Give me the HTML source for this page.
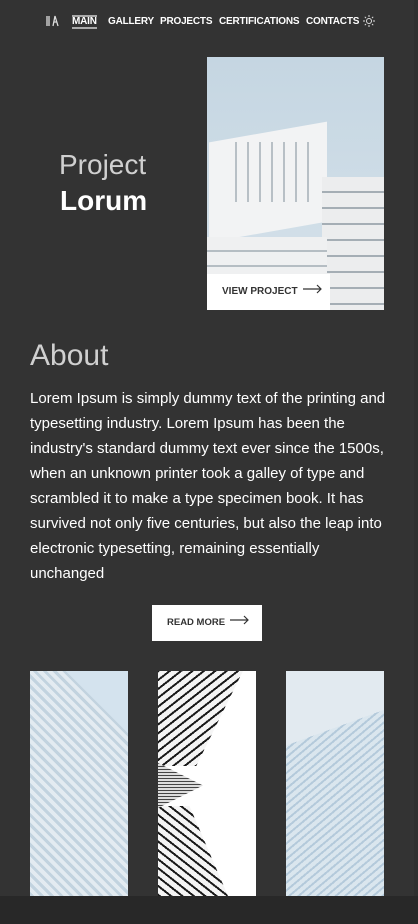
<!DOCTYPE html>
<html><head><style>
*{margin:0;padding:0;box-sizing:border-box}
body{width:418px;height:924px;background:#333;font-family:"Liberation Sans",sans-serif;color:#fff;position:relative;overflow:hidden}
.nav{position:absolute;top:16px;left:0;width:418px;height:16px;font-size:10px;font-weight:bold;letter-spacing:-0.2px}
.nav span{position:absolute;top:0}
.a{position:absolute}
.bld{position:absolute}
</style></head><body>
<div class="nav">
<span style="left:46px;top:-1px"><svg width="14" height="12"><path d="M1 1V11M3 1V11M7 11L9 1L12 11M8 7H11" stroke="#ddd" stroke-width="1.3" fill="none"/></svg></span>
<span style="left:72px;border-top:2px solid #aaa;border-bottom:2px solid #aaa;top:-1px;line-height:10px">MAIN</span>
<span style="left:108px">GALLERY</span>
<span style="left:160px">PROJECTS</span>
<span style="left:219px">CERTIFICATIONS</span>
<span style="left:306px">CONTACTS</span>
<span style="left:363px;top:-1px"><svg width="12" height="12"><circle cx="6" cy="6" r="2.5" stroke="#ddd" fill="none"/><path d="M6 0V2M6 10V12M0 6H2M10 6H12M1.8 1.8L3 3M9 9L10.2 10.2M1.8 10.2L3 9M9 3L10.2 1.8" stroke="#ddd"/></svg></span>
</div>
<div class="a" style="left:59px;top:149px;font-size:28px;color:#d0d0d0">Project</div>
<div class="a" style="left:60px;top:185px;font-size:28px;font-weight:bold">Lorum</div>
<div class="a" style="left:207px;top:57px;width:177px;height:253px;background:linear-gradient(#c5d6e2,#d6e2ea);overflow:hidden">
 <div class="bld" style="left:2px;top:75px;width:118px;height:100px;transform:skewY(-10deg);background:#f2f3f4"></div>
 <div class="bld" style="left:18px;top:85px;width:90px;height:60px;background:repeating-linear-gradient(90deg,#f2f3f4 0 10px,#b8c0c6 10px 12px)"></div>
 <div class="bld" style="left:115px;top:120px;width:62px;height:133px;background:repeating-linear-gradient(#ecedee 0 14px,#a5aeb5 14px 16px)"></div>
 <div class="bld" style="left:0;top:180px;width:120px;height:73px;background:repeating-linear-gradient(#eff0f1 0 13px,#b5bdc3 13px 15px)"></div>
</div>
<div class="a" style="left:207px;top:274px;width:123px;height:36px;background:#fff;color:#333;font-size:10px;font-weight:bold;line-height:36px;padding-left:15px">VIEW PROJECT <svg width="20" height="10" style="margin-left:3px"><path d="M0 5H18M14 1L18 5L14 9" stroke="#333" stroke-width="1.2" fill="none"/></svg></div>
<div class="a" style="left:30px;top:339px;font-size:30px;color:#d0d0d0">About</div>
<div class="a" style="left:30px;top:386px;width:360px;font-size:15px;line-height:25px;color:#fff">Lorem Ipsum is simply dummy text of the printing and typesetting industry. Lorem Ipsum has been the industry's standard dummy text ever since the 1500s, when an unknown printer took a galley of type and scrambled it to make a type specimen book. It has survived not only five centuries, but also the leap into electronic typesetting, remaining essentially unchanged</div>
<div class="a" style="left:152px;top:605px;width:110px;height:36px;background:#fff;color:#333;font-size:9.5px;font-weight:bold;line-height:36px;padding-left:15px">READ MORE <svg width="20" height="10" style="margin-left:2px"><path d="M0 5H18M14 1L18 5L14 9" stroke="#333" stroke-width="1.2" fill="none"/></svg></div>
<div class="a" style="left:30px;top:671px;width:98px;height:225px;background:repeating-linear-gradient(45deg,#c2d3df 0 3px,#e3ebf1 3px 7px)"></div>
<div class="a" style="left:30px;top:671px;width:98px;height:80px;background:linear-gradient(225deg,#d4e3ee 0 35%,transparent 35%)"></div>
<div class="a" style="left:158px;top:671px;width:98px;height:225px;background:#fff;overflow:hidden">
 <div style="position:absolute;left:0;top:0;width:85px;height:95px;background:repeating-linear-gradient(-38deg,#1a1a1a 0 2px,#f5f5f5 2px 7px);clip-path:polygon(0 0,100% 0,45% 100%,0 100%)"></div>
 <div style="position:absolute;left:0;top:135px;width:70px;height:90px;background:repeating-linear-gradient(38deg,#1a1a1a 0 2px,#f5f5f5 2px 7px);clip-path:polygon(0 0,45% 0,100% 100%,0 100%)"></div>
 <div style="position:absolute;left:0;top:92px;width:45px;height:45px;background:repeating-linear-gradient(#444 0 1px,#ddd 1px 3px);clip-path:polygon(0 0,100% 50%,0 100%)"></div>
</div>
<div class="a" style="left:286px;top:671px;width:98px;height:225px;background:repeating-linear-gradient(-40deg,#b4cadb 0 2px,#dae6ee 2px 6px)"></div>
<div class="a" style="left:286px;top:671px;width:98px;height:130px;background:linear-gradient(160deg,#e2eaf0 0 45%,transparent 45%)"></div>
<div class="a" style="left:0;top:896px;width:418px;height:28px;background:#282828"></div>
<div class="a" style="left:414px;top:0;width:4px;height:896px;background:#2f2f2f"></div>
</body></html>
